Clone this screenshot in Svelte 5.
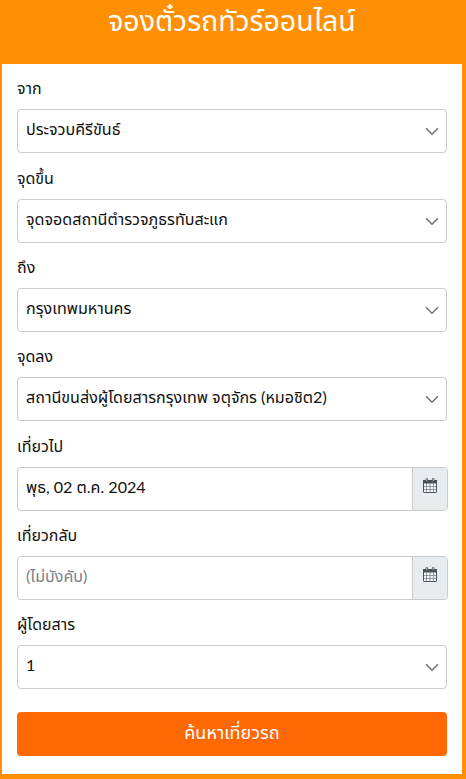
<script>

  let fields = [
    { label: 'จาก', value: 'ประจวบคีรีขันธ์' },
    { label: 'จุดขึ้น', value: 'จุดจอดสถานีตำรวจภูธรทับสะแก' },
    { label: 'ถึง', value: 'กรุงเทพมหานคร' },
    { label: 'จุดลง', value: 'สถานีขนส่งผู้โดยสารกรุงเทพ จตุจักร (หมอชิต2)' },
    { label: 'เที่ยวไป', value: 'พุธ, 02 ต.ค. 2024', date: true },
    { label: 'เที่ยวกลับ', value: '(ไม่บังคับ)', date: true, empty: true },
    { label: 'ผู้โดยสาร', value: '1' }
  ]

</script>

<main>

  <h1>จองตั๋วรถทัวร์ออนไลน์</h1>

  <section class="card">
    {#each fields as field}
      <div class="field">
        <span class="label">{field.label}</span>
        <div class="control" class:date={field.date}>
          <span class="value" class:empty={field.empty}>{field.value}</span>
          {#if field.date}
            <span class="addon">
              <svg width="15" height="16" viewBox="0 0 15 16">
                <rect x=".5" y="2.5" width="13" height="12" rx=".6" fill="#f4f5f6" stroke="#495057" />
                <path fill="#495057" d="M0 2h14v3.5H0z" />
                <path fill="none" stroke="#7d8389" stroke-width=".8" d="M3.500 5v9.500M7 5v9.500M10.500 5v9.500M1 8.500h12M1 11.500h12" />
                <path fill="#e9ecef" stroke="#495057" stroke-width=".9" d="M3 1.200q0-.8.8-.8t.8.8v2.300H3zM9.400 1.200q0-.8.8-.8t.8.8v2.300H9.400z" />
              </svg>
            </span>
          {:else}
            <svg class="arrow" width="14" height="9" viewBox="0 0 14 9">
              <path fill="none" stroke="#707070" stroke-width="1.5" d="M1 1.300l6 6 6-6" />
            </svg>
          {/if}
        </div>
      </div>
    {/each}

    <button>ค้นหาเที่ยวรถ</button>
  </section>

</main>

<style>

  :global(body) {
    background: #ff9004;
  }

  main {
    box-sizing: border-box;
    height: 779px;
    padding: 0 4px 5px 2px;
    overflow: hidden;
    background: #ff9004;
    color: #111;
    font-family: Lato, "Noto Sans Thai", "Noto Sans", sans-serif;
    font-size: 16px;
  }

  h1 {
    height: 64px;
    margin: 0;
    color: #fff;
    font-size: 28.5px;
    font-weight: 400;
    line-height: 41px;
    text-align: center;
    white-space: nowrap;
  }

  .card {
    box-sizing: border-box;
    height: 710px;
    padding: 13.3px 15px 0;
    background: #fff;
  }

  .field {
    height: 89.33px;
  }

  .label {
    display: block;
    height: 24px;
    margin-bottom: 8px;
    line-height: 22px;
    white-space: nowrap;
  }

  .control {
    display: flex;
    box-sizing: border-box;
    height: 44px;
    justify-content: space-between;
    border: 1px solid #c9cbcf;
    border-radius: 4px;
  }

  .date {
    margin-right: -1px;
  }

  .value {
    padding-left: 8px;
    font-size: 16.1px;
    line-height: 38px;
    white-space: nowrap;
  }

  .empty {
    color: #7b8188;
  }

  .arrow {
    margin: 17px 7px 0 0;
  }

  .addon {
    box-sizing: border-box;
    width: 35px;
    padding: 10px 0 0 10px;
    border-left: 1px solid #c9cbcf;
    border-radius: 0 3px 3px 0;
    background: #e9ecef;
  }

  button {
    display: block;
    width: 100%;
    height: 44px;
    margin-top: 9.4px;
    padding: 0 0 3px;
    border: none;
    border-radius: 4px;
    background: #ff6802;
    color: #fff;
    font-family: inherit;
    font-size: 18px;
    line-height: 40px;
  }

</style>
